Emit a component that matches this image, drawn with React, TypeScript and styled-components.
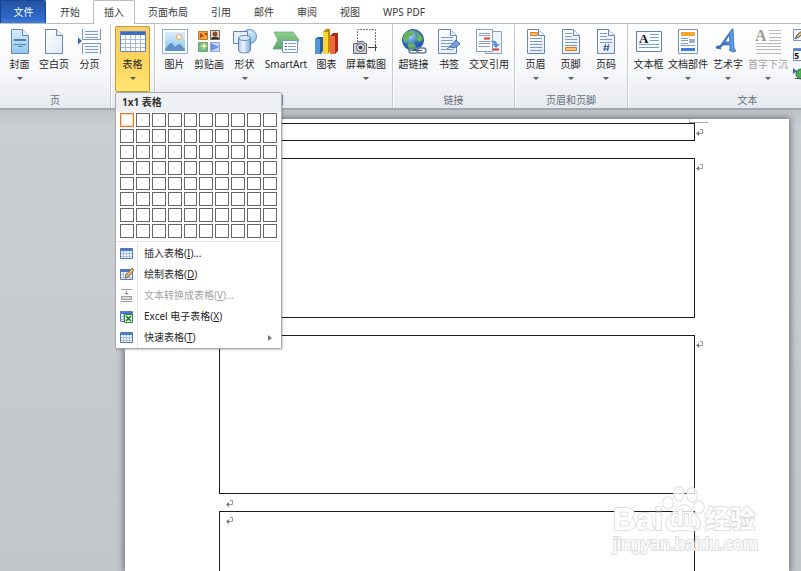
import React from "react";
import styled, { createGlobalStyle, css } from "styled-components";

const Global = createGlobalStyle`
  * { box-sizing: border-box; }
  body {
    margin: 0;
    font: 10px/14px "Noto Sans", "Noto Sans CJK SC", sans-serif;
    color: #262626;
    background: #fff;
  }
  button { font: inherit; color: inherit; border: 0; background: none; padding: 0; margin: 0; }
`;

const Window = styled.div`
  min-height: 100vh;
  display: flex;
  flex-direction: column;
  overflow: hidden;
`;

const TabBar = styled.nav`
  display: flex;
  height: 24px;
  border-bottom: 1px solid #b9bec5;
  white-space: nowrap;
`;

const Tab = styled.button<{ $kind?: "file" | "active" | "home" }>`
  padding: 0 11px 0 12px;
  height: 23px;
  color: #3b3b3b;
  flex: none;
  ${(p) =>
    p.$kind === "file" &&
    css`
      width: 46px;
      color: #fff;
      background: linear-gradient(#2352a5, #2f68c8 75%, #3f7bd8);
      border: 1px solid #1d4690;
      border-bottom: 0;
      border-radius: 0 2px 0 0;
    `}
  ${(p) => p.$kind === "home" && css`width: 47px;`}
  ${(p) =>
    p.$kind === "active" &&
    css`
      width: 42px;
      padding: 0 0 1px;
      margin-right: 1px;
      background: #fff;
      border: 1px solid #b9bec5;
      border-bottom: 0;
      border-radius: 2px 2px 0 0;
      margin-bottom: -1px;
      height: 24px;
    `}
`;

const Ribbon = styled.div`
  display: flex;
  height: 86px;
  background: linear-gradient(#ffffff, #f7f8fa 55%, #e6e9ee);
  border-bottom: 2px solid #a2a8af;
`;

const Group = styled.section<{ $wide?: boolean }>`
  flex: none;
  display: flex;
  flex-direction: column;
  border-right: 1px solid #c6cad0;
  box-shadow: 1px 0 0 #fff;
  padding: 2px 3px 0;
  ${(p) => p.$wide && css`width: 240px;`}
`;

const Tools = styled.div`
  display: flex;
  height: 66px;
`;

const GroupName = styled.div`
  text-align: center;
  color: #66707d;
  line-height: 17px;
`;

const Tool = styled.button<{ $w: number; $on?: boolean; $off?: boolean }>`
  width: ${(p) => p.$w}px;
  height: 66px;
  flex: none;
  display: flex;
  flex-direction: column;
  align-items: center;
  justify-content: flex-start;
  padding-top: 3px;
  white-space: nowrap;
  color: ${(p) => (p.$off ? "#a0a0a0" : "#262626")};
  border-radius: 2px;
  ${(p) =>
    p.$on &&
    css`
      background: linear-gradient(#f8cf6c, #fbd45f 50%, #ffe573);
      box-shadow: inset 0 0 0 1px #c39a3f;
    `}
  svg { flex: none; overflow: visible; }
`;

const ToolLabel = styled.span`
  margin-top: 3px;
  line-height: 14px;
`;

const Caret = styled.span`
  margin-top: 6px;
  border: 3px solid transparent;
  border-top-color: #5a5a5a;
  border-bottom: 0;
`;

const MenuAnchor = styled.div`
  position: relative;
  padding: 0 1px;
`;

const Menu = styled.div`
  position: absolute;
  z-index: 5;
  top: 66px;
  left: 1px;
  width: 167px;
  background: #fff;
  border: 1px solid #a7abb0;
  border-radius: 2px;
  box-shadow: 1px 1px 2px rgba(0, 0, 0, 0.2);
`;

const MenuTitle = styled.h2`
  margin: 0;
  height: 19px;
  padding: 0 6px;
  font-size: 10px;
  line-height: 19px;
  background: #eef0f4;
  color: #333;
`;

const SizeGrid = styled.div`
  display: grid;
  grid-template-columns: repeat(10, 1fr);
  grid-template-rows: repeat(8, 1fr);
  gap: 2px;
  height: 125px;
  margin: 1px 4px 3px;
`;

const SizeCell = styled.button<{ $on: boolean }>`
  background: #fff;
  border: 1px solid #666;
  ${(p) =>
    p.$on &&
    css`
      border-color: #e8703a;
      box-shadow: inset 0 0 0 1px #fbdc97;
    `}
`;

const MenuList = styled.div`
  border-top: 1px solid #e1e3e6;
  margin: 0 1px;
  padding-top: 1px;
`;

const MenuItem = styled.button<{ $off?: boolean }>`
  display: grid;
  grid-template-columns: 20px 1fr 12px;
  align-items: center;
  width: 100%;
  height: 21px;
  text-align: left;
  color: ${(p) => (p.$off ? "#a3a3a3" : "#262626")};
  svg { margin-left: 3px; }
`;

const MenuText = styled.span`
  border-left: 1px solid #e1e3e6;
  padding-left: 6px;
  line-height: 21px;
`;

const SubArrow = styled.span`
  justify-self: start;
  border: 3px solid transparent;
  border-left: 4px solid #777;
  border-right: 0;
`;

const SideIcons = styled.div`
  display: flex;
  flex-direction: column;
  gap: 6px;
  padding: 3px 0 0 3px;
`;

const SideButton = styled.button`
  width: 14px;
  height: 13px;
  svg { display: block; }
`;

const Workspace = styled.main`
  flex: 1;
  display: flex;
  padding: 9px 12px 0 125px;
  background: linear-gradient(#bfc3c8, #cbced3 16px, #c2c5ca);
  position: relative;
`;

const Page = styled.article`
  flex: 1;
  display: flex;
  flex-direction: column;
  padding: 4px 94px 0;
  background: #fff;
  box-shadow: 0 0 7px 1px rgba(70, 75, 82, 0.75);
  position: relative;
`;

const Corner = styled.span`
  position: absolute;
  top: 0;
  right: 81px;
  width: 19px;
  height: 4px;
  border-left: 1px solid #c4c4c4;
  border-bottom: 1px solid #a5a5a5;
`;

const Frame = styled.div<{ $h?: number }>`
  ${(p) => (p.$h ? css`height: ${p.$h}px;` : css`flex: 1; border-bottom: 0 !important;`)}
  border: 1px solid #1c1c1c;
  position: relative;
  display: flex;
  align-items: flex-start;
  padding: 5px 6px;
`;

const EndMark = styled.span`
  position: absolute;
  left: 100%;
  top: 5px;
  display: flex;
  padding-left: 2px;
`;

const Gap = styled.div`
  height: 17px;
  padding: 6px 7px;
  display: flex;
`;

const Watermark = styled.div`
  position: absolute;
  right: 44px;
  bottom: 16px;
  width: 144px;
  height: 70px;
  display: flex;
  flex-direction: column;
  justify-content: flex-end;
  color: #fff;
  font-family: "Liberation Sans", "Noto Sans CJK SC", sans-serif;
  -webkit-text-stroke: 2px #dedede;
  paint-order: stroke fill;
  svg { position: absolute; left: 46px; top: 0; }
`;

const Brand = styled.div`
  position: relative;
  display: flex;
  font-weight: bold;
  font-size: 32px;
  line-height: 28px;
`;

const BrandPart = styled.span<{ $w?: number; $size?: number }>`
  ${(p) => p.$w && css`width: ${p.$w}px;`}
  ${(p) => p.$size && css`font-size: ${p.$size}px;`}
`;

const Site = styled.div`
  font-size: 18px;
  line-height: 22px;
  white-space: nowrap;
`;

const Defs = styled.svg`
  position: absolute;
`;

const Sheet = ({ x = 4.5, y = 0.5, w = 17, h = 24, fill = "url(#paper)" }) => (
  <g stroke="#6b86ab" fill={fill}>
    <path d={`M${x} ${y}h${w - 6}l6 6v${h - 6}h${-w}z`} />
    <path d={`M${x + w - 6} ${y}v6h6`} fill="#e8f0fa" />
  </g>
);

const Bars = ({ x, w, ys, c = "#7f9cc8" }: { x: number; w: number; ys: number[]; c?: string }) => (
  <path d={ys.map((y) => `M${x} ${y}.5h${w}`).join("")} stroke={c} fill="none" />
);

const art: Record<string, React.ReactNode> = {
  cover: (
    <>
      <Sheet fill="url(#sky)" />
      <path d="M7 12l1-2 1 2 1-2 1 2 1-2 1 2 1-2 1 2 1-2 1 2 1-2 1 2" stroke="#3b6e9f" fill="none" />
      <path d="M7 15.5h12M11 17.5h5" stroke="#4f86b5" />
    </>
  ),
  blank: <Sheet />,
  breakPage: (
    <>
      <path d="M5.500 0v10.500h18V0M5.500 25V14.500h18V25" fill="#f4f8fd" stroke="#8295b0" />
      <Bars x={8} w={13} ys={[2, 5, 8, 17, 20, 23]} />
      <path d="M1 8.500v7l4-3.500z" fill="#2f67bb" />
    </>
  ),
  table: (
    <>
      <path d="M.5 2.500h25v20H.5z" fill="#fff" stroke="#6484b8" />
      <path d="M1 3h24v3H1z" fill="#3b6cc4" />
      <path d="M1 10.500h24M1 14.500h24M1 18.500h24M5.500 6v16M10.500 6v16M15.500 6v16M20.500 6v16" stroke="#a9b9d2" />
    </>
  ),
  picture: (
    <>
      <path d="M.5.5h25v24H.5z" fill="#fff" stroke="#8da9cc" />
      <path d="M3 3h20v19H3z" fill="url(#sky)" />
      <circle cx="17" cy="8" r="2.500" fill="#fff4df" stroke="#f3a35c" />
      <path d="M3 20c2-1 4-6 6-6s3 3 4 4c2-2 3-3 4-3 2 0 3 3 6 5v2H3z" fill="#5d8fca" />
    </>
  ),
  clip: (
    <>
      <path d="M2.500 2.500h9v8h-9z" fill="#f6a62f" stroke="#c8742a" />
      <path d="M4 4l4 3-4 2zM8 4h3v3z" fill="#b04018" />
      <path d="M14.500 1.500h9v9h-9z" fill="#e4d8c8" stroke="#6f655d" />
      <circle cx="19" cy="5" r="2.500" fill="#8b4b29" />
      <path d="M15 10c0-3 8-3 8 0z" fill="#333" />
      <path d="M2.500 13.500h9v9h-9z" fill="#7dbb8c" stroke="#65a577" />
      <path d="M8 13l1 3 3 1-3 1-1 3-1-3-3-1 3-1z" fill="#f4f29a" />
      <path d="M14.500 13.500h9v9h-9z" fill="#c9d7f6" stroke="#8ca5dc" />
      <path d="M15 14l8 4-8 4z" fill="#6e8fe0" />
    </>
  ),
  shapes: (
    <g stroke="#5f85b8">
      <circle cx="17.500" cy="7.500" r="7" fill="url(#sky)" />
      <path d="M1.500 2.500h14v12h-14z" fill="#e4effb" />
      <path d="M6.500 9v12c0 4 12 4 12 0V9z" fill="url(#tube)" />
      <ellipse cx="12.500" cy="9" rx="6" ry="2.500" fill="#dceafb" />
    </g>
  ),
  smart: (
    <>
      <path d="M1 3h19l6 8-5 9H0l5-9z" fill="url(#leaf)" stroke="#5aa366" strokeWidth=".7" />
      <path d="M9.500 11.500h15v12h-15z" fill="#f8fbff" stroke="#7d9ac1" />
      <path d="M12 14.500h2M12 17.500h2M12 20.500h2" stroke="#4b74b0" />
      <Bars x={15} w={8} ys={[14, 17, 20]} />
    </>
  ),
  chart: (
    <>
      <path d="M1 10l3-2h5v14l-2 3H1z" fill="#245f9e" />
      <path d="M1 10h5v15H1z" fill="#4c98d8" />
      <path d="M9 3l3-3h4v22l-2 3H9z" fill="#c58a00" />
      <path d="M9 3h5v22H9z" fill="#fbd636" />
      <path d="M16 7l3-3h5v18l-3 3h-5z" fill="#a82b14" />
      <path d="M16 7h5v18h-5z" fill="#ee6741" />
    </>
  ),
  shot: (
    <>
      <path d="M4.500 13V.5h18V17" fill="none" stroke="#777" strokeDasharray="2 1" />
      <path d="M15 18.500h9M22.500 15v7" stroke="#444" />
      <path d="M.5 14.500h4l1-2h5l1 2h2v10H.5z" fill="#cdd0d5" stroke="#666" />
      <circle cx="7.500" cy="18.500" r="4" fill="#eee" stroke="#555" />
      <circle cx="7.500" cy="18.500" r="2" fill="#34465c" />
    </>
  ),
  globe: (
    <>
      <circle cx="12" cy="11" r="10.500" fill="url(#ball)" stroke="#24589b" />
      <path d="M4 4c3-3 7-3 9-2l-1 4-4 2-1 4-4 1-1-4zM15 3c4 1 6 4 7 8l-4 2-3-3 2-3zM7 15l5-1 3 3-4 5c-3-1-4-3-4-7z" fill="#68b45a" />
      <g fill="none" stroke="#6d7f9a" strokeWidth="1.500">
        <rect x="8" y="19" width="9" height="5" rx="2.500" />
        <rect x="16" y="19" width="9" height="5" rx="2.500" />
      </g>
      <path d="M12 21.500h9" stroke="#46556d" />
    </>
  ),
  bookmark: (
    <>
      <Sheet x={2.5} w={18} />
      <Bars x={5} w={12} ys={[8, 11, 14, 17, 20]} />
      <path d="M14 18l6-7 4 4-6 4-3-1z" fill="#7ca2dd" stroke="#3b68ad" />
      <path d="M11 20l4-3" stroke="#3b68ad" />
    </>
  ),
  cross: (
    <>
      <path d="M9.500 2.500h16v22h-16z" fill="#edf4fc" stroke="#8aa0bf" />
      <path d="M.5.5h16v22H.5z" fill="#fff" stroke="#8aa0bf" />
      <Bars x={3} w={11} ys={[4, 6, 12, 14, 17]} />
      <path d="M8 9.500h6M17 20.500h6" stroke="#df3a26" strokeWidth="2" />
      <path d="M15 12c4-1 6 0 6 3h3l-4 4-4-4h2c0-1-1-2-3-2z" fill="#5b8fe0" />
    </>
  ),
  header: (
    <>
      <Sheet />
      <path d="M7.500 3.500h7v3h-7z" fill="#ffc36c" stroke="#d97d25" />
      <Bars x={7} w={12} ys={[9, 12, 15, 18, 21]} />
    </>
  ),
  footer: (
    <>
      <Sheet />
      <Bars x={7} w={7} ys={[4, 7]} />
      <Bars x={7} w={12} ys={[10, 13, 16]} />
      <path d="M7.500 18.500h11v3h-11z" fill="#ffc36c" stroke="#d97d25" />
    </>
  ),
  number: (
    <>
      <Sheet />
      <Bars x={7} w={7} ys={[4, 7]} />
      <Bars x={7} w={12} ys={[10, 13]} />
      <path d="M12.500 15l-1 7M15.500 15l-1 7M10.500 17.500h6M10 20h6" stroke="#365c99" />
    </>
  ),
  textbox: (
    <>
      <path d="M.5 2.500h25v20H.5z" fill="#f8fbff" stroke="#5f7fae" />
      <text x="3" y="14" fontFamily="Liberation Serif, serif" fontWeight="bold" fontSize="13" fill="#111">A</text>
      <Bars x={14} w={9} ys={[5, 8, 11]} />
      <Bars x={3} w={20} ys={[15, 18]} />
    </>
  ),
  parts: (
    <>
      <path d="M3.500.5h19v24h-19z" fill="#fff" stroke="#7590b7" />
      <path d="M6 3h14v4H6z" fill="#f9a72e" />
      <path d="M14 10h6v4h-6z" fill="#9caec8" />
      <Bars x={6} w={7} ys={[9, 11, 14]} />
      <Bars x={6} w={14} ys={[16]} />
      <path d="M6 19h14v3H6z" fill="#3f79d9" />
    </>
  ),
  wordart: (
    <path d="M17 0h1l1 19 2 3-3 1-4-2 1-1v-4H8l-3 3 1 1-5-1 1-2h3zM10 13h5l-1-7z" fill="url(#blueA)" stroke="#2459a9" strokeWidth=".7" fillRule="evenodd" />
  ),
  dropcap: (
    <>
      <text x="0" y="12" fontFamily="Liberation Serif, serif" fontWeight="bold" fontSize="16" fill="#9b9b9b">A</text>
      <Bars x={14} w={12} ys={[1, 4, 8, 11]} c="#bbb" />
      <Bars x={1} w={25} ys={[14, 17, 20, 24]} c="#bbb" />
    </>
  ),
};

const menuArt: Record<string, React.ReactNode> = {
  grid: (
    <>
      <path d="M.5 1.500h12v10H.5z" fill="#f0f5fd" stroke="#5378b5" />
      <path d="M1 2h11v2H1z" fill="#4779cf" />
      <path d="M1 6.500h11M1 9.500h11M3.500 4v7M6.500 4v7M9.500 4v7" stroke="#a9bfe3" />
    </>
  ),
  convert: (
    <>
      <path d="M1 .5h11M1 12.500h11M6.500 2v4M4.500 4.500h4" stroke="#999" />
      <path d="M1.500 7.500h10v3h-10z" fill="#ddd" stroke="#999" />
    </>
  ),
};
menuArt.draw = (
  <>
    {menuArt.grid}
    <path d="M5 10l1-3 6-7 2 2-6 7z" fill="#eabc62" stroke="#775332" strokeWidth=".8" />
  </>
);
menuArt.excel = (
  <>
    {menuArt.grid}
    <path d="M4.500 4.500h8v8h-8z" fill="#e2f3df" stroke="#2d8a3d" />
    <path d="M6 6l5 5M11 6l-5 5" stroke="#24752f" strokeWidth="1.500" />
  </>
);

type ToolSpec = [icon: string, label: string, width: number, caret?: boolean, off?: boolean];

const ToolButton = ({ spec: [icon, label, w, caret, off], on }: { spec: ToolSpec; on?: boolean }) => (
  <Tool $w={w} $on={on} $off={off} disabled={off} aria-expanded={on}>
    <svg width="26" height="25" viewBox="0 0 26 25" aria-hidden="true">{art[icon]}</svg>
    <ToolLabel>{label}</ToolLabel>
    {caret && <Caret />}
  </Tool>
);

const ToolGroup = ({ name, tools, wide, children }: { name: string; tools: ToolSpec[]; wide?: boolean; children?: React.ReactNode }) => (
  <Group $wide={wide} aria-label={name}>
    <Tools>
      {tools.map((t) => <ToolButton key={t[1]} spec={t} />)}
      {children}
    </Tools>
    <GroupName>{name}</GroupName>
  </Group>
);

const menuItems = [
  { icon: "grid", text: "插入表格", hotkey: "I", tail: "..." },
  { icon: "draw", text: "绘制表格", hotkey: "D" },
  { icon: "convert", text: "文本转换成表格", hotkey: "V", tail: "...", off: true },
  { icon: "excel", text: "Excel 电子表格", hotkey: "X" },
  { icon: "grid", text: "快速表格", hotkey: "T", sub: true },
];

const TableMenu = () => (
  <Menu>
    <MenuTitle>1x1 表格</MenuTitle>
    <SizeGrid>
      {Array.from({ length: 80 }, (_, i) => (
        <SizeCell key={i} $on={i === 0} aria-label={`${(i % 10) + 1}x${Math.floor(i / 10) + 1}`} />
      ))}
    </SizeGrid>
    <MenuList>
      {menuItems.map((m) => (
        <MenuItem key={m.text} $off={m.off} disabled={m.off}>
          <svg width="14" height="13" viewBox="0 0 14 13" aria-hidden="true">{menuArt[m.icon]}</svg>
          <MenuText>{m.text}(<u>{m.hotkey}</u>){m.tail}</MenuText>
          {m.sub && <SubArrow />}
        </MenuItem>
      ))}
    </MenuList>
  </Menu>
);

const ReturnMark = () => (
  <svg width="8" height="8" viewBox="0 0 8 8" aria-hidden="true">
    <path d="M4 .5h2.500v4H2" fill="none" stroke="#999" />
    <path d="M0 4.500l3-2.500v5z" fill="#777" />
  </svg>
);

export default function App() {
  return (
    <Window lang="zh-CN">
      <Global />
      <Defs width="0" height="0" aria-hidden="true">
        <defs>
          <linearGradient id="paper" x2="1" y2="1"><stop stopColor="#fff" /><stop offset="1" stopColor="#dfe9f6" /></linearGradient>
          <linearGradient id="sky" x2="0" y2="1"><stop stopColor="#d8edfa" /><stop offset="1" stopColor="#8fc6ec" /></linearGradient>
          <linearGradient id="tube"><stop stopColor="#a9c9ef" /><stop offset=".4" stopColor="#eef6ff" /><stop offset="1" stopColor="#7aa7dd" /></linearGradient>
          <linearGradient id="leaf" x2="0" y2="1"><stop stopColor="#8fd08f" /><stop offset="1" stopColor="#55a867" /></linearGradient>
          <linearGradient id="blueA"><stop stopColor="#2e66b9" /><stop offset="1" stopColor="#68a5ed" /></linearGradient>
          <radialGradient id="ball" cx=".35" cy=".3"><stop stopColor="#b6dcfa" /><stop offset="1" stopColor="#2361b4" /></radialGradient>
        </defs>
      </Defs>

      <TabBar>
        <Tab $kind="file">文件</Tab>
        <Tab $kind="home">开始</Tab>
        <Tab $kind="active" aria-current="page">插入</Tab>
        {["页面布局", "引用", "邮件", "审阅", "视图", "WPS PDF"].map((t) => <Tab key={t}>{t}</Tab>)}
      </TabBar>

      <Ribbon>
        <ToolGroup name="页" tools={[["cover", "封面", 33, true], ["blank", "空白页", 36], ["breakPage", "分页", 35]]} />
        <Group>
          <MenuAnchor>
            <ToolButton spec={["table", "表格", 35, true]} on />
            <TableMenu />
          </MenuAnchor>
        </Group>
        <ToolGroup
          name="插图"
          tools={[["picture", "图片", 33], ["clip", "剪贴画", 36], ["shapes", "形状", 35, true], ["smart", "SmartArt", 48], ["chart", "图表", 33], ["shot", "屏幕截图", 46, true]]}
        />
        <ToolGroup name="链接" tools={[["globe", "超链接", 35], ["bookmark", "书签", 36], ["cross", "交叉引用", 44]]} />
        <ToolGroup name="页眉和页脚" tools={[["header", "页眉", 35, true], ["footer", "页脚", 35, true], ["number", "页码", 36, true]]} />
        <ToolGroup
          wide
          name="文本"
          tools={[["textbox", "文本框", 35, true], ["parts", "文档部件", 44, true], ["wordart", "艺术字", 36, true], ["dropcap", "首字下沉", 44, true, true]]}
        >
          <SideIcons>
            <SideButton aria-label="签名行">
              <svg width="14" height="13" viewBox="0 0 14 13">
                <path d="M.5.5h12v11H.5z" fill="#eef4fc" stroke="#7d93b5" />
                <path d="M2 10l2-4 6-5 2 2-6 5z" fill="#e6b45c" stroke="#4d5b73" />
              </svg>
            </SideButton>
            <SideButton aria-label="日期和时间">
              <svg width="14" height="13" viewBox="0 0 14 13">
                <path d="M.5.5h13v12H.5z" fill="#fff" stroke="#6c8dc5" />
                <path d="M1 1h12v2H1z" fill="#4e7fd0" />
                <text x="1" y="11" fontSize="9" fontWeight="bold" fill="#222">5</text>
              </svg>
            </SideButton>
            <SideButton aria-label="对象">
              <svg width="14" height="13" viewBox="0 0 14 13">
                <path d="M0 1v6l4-3z" fill="#2f67bb" />
                <circle cx="8" cy="7" r="5" fill="#4cab54" stroke="#26743a" />
                <path d="M2 11.500h12" stroke="#555" />
              </svg>
            </SideButton>
          </SideIcons>
        </ToolGroup>
      </Ribbon>

      <Workspace>
        <Page>
          <Corner />
          <Frame $h={18}><EndMark><ReturnMark /></EndMark></Frame>
          <Gap />
          <Frame $h={160}><EndMark><ReturnMark /></EndMark></Frame>
          <Gap />
          <Frame $h={159}><EndMark><ReturnMark /></EndMark></Frame>
          <Gap><ReturnMark /></Gap>
          <Frame><ReturnMark /></Frame>
        </Page>
        <Watermark>
          <svg width="46" height="56" viewBox="0 0 46 56" fill="#fff" fillOpacity=".8" stroke="#dadada" strokeWidth="1.500" aria-hidden="true">
            <ellipse cx="20" cy="9" rx="5" ry="7" />
            <ellipse cx="33" cy="10" rx="5" ry="7" />
            <ellipse cx="9" cy="18" rx="5" ry="6" />
            <ellipse cx="40" cy="22" rx="5" ry="6" />
            <path d="M25 20c6 0 8 7 12 10 7 6 5 15-3 16-4 0-6-1-10-1s-6 1-10 1c-8-1-9-10-3-16 5-4 8-10 14-10z" />
          </svg>
          <Brand>
            <BrandPart $w={57}>Bai</BrandPart>
            <BrandPart $w={35} $size={22}>du</BrandPart>
            <BrandPart $size={25}>经验</BrandPart>
          </Brand>
          <Site>jingyan.baidu.com</Site>
        </Watermark>
      </Workspace>
    </Window>
  );
}
